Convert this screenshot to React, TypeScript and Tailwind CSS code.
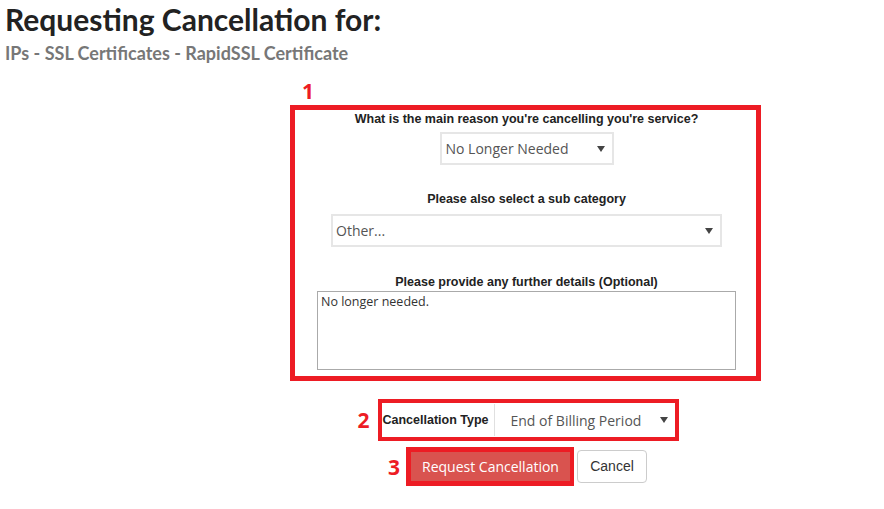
import React from "react";

const Arrow = () => (
  <svg width="8" height="6" viewBox="0 0 8 6">
    <path d="M0 0 L8 0 L4 6 Z" fill="#444" />
  </svg>
);

const labelCls =
  "text-[12.5px] leading-[16px] font-bold text-[#222] font-['Liberation_Sans',Arial,sans-serif]";
const selectText = "text-[14px] text-[#555] font-['Open_Sans',sans-serif]";
const numCls =
  "absolute text-[21px] leading-[24px] font-bold text-[#ed1c24] font-['Open_Sans',sans-serif]";

export default function App() {
  return (
    <div className="w-[884px] h-[509px] bg-white overflow-hidden relative">
      <div className="pl-[5px] pt-[1px] font-['Lato','Open_Sans',sans-serif]">
        <h1 className="text-[30px] leading-[36px] font-bold text-[#222]">Requesting Cancellation for:</h1>
        <div className="text-[18px] leading-[22px] font-bold text-[#777] mt-[5px]">
          IPs - SSL Certificates - RapidSSL Certificate
        </div>
      </div>
      <div className="ml-[290px] w-[471px] flex flex-col items-center">
        <div className="self-start relative h-[41px] w-full">
          <span className={`${numCls} left-[12px] top-[15px]`}>1</span>
        </div>
        <div className="w-[471px] h-[276px] border-[5px] border-[#ed1c24] flex flex-col items-center">
          <div className={`${labelCls} mt-[1px] pl-[2px]`}>
            What is the main reason you're cancelling you're service?
          </div>
          <div className="mt-[5px] w-[174px] h-[33px] border-2 border-[#e6e6e6] flex items-center justify-between pl-[4px] pr-[7px] ml-[2px]">
            <span className={selectText}>No Longer Needed</span>
            <Arrow />
          </div>
          <div className={`${labelCls} mt-[26px] pl-[2px]`}>Please also select a sub category</div>
          <div className="mt-[7px] w-[391px] h-[33px] border-2 border-[#e6e6e6] flex items-center justify-between pl-[3px] pr-[7px] ml-[2px]">
            <span className={selectText}>Other...</span>
            <Arrow />
          </div>
          <div className={`${labelCls} mt-[27px] pl-[2px]`}>Please provide any further details (Optional)</div>
          <div className="mt-[1px] w-[419px] h-[79px] border border-[#aaa] px-[3px] ml-[2px] leading-[16px]">
            <span className="text-[12.5px] leading-[16px] text-[#333] font-['Open_Sans',sans-serif]">
              No longer needed.
            </span>
          </div>
        </div>
        <div className="relative mt-[18px] ml-[5px]">
          <span className={`${numCls} right-[100%] mr-[8px] top-[9px]`}>2</span>
          <div className="w-[301px] h-[42px] border-4 border-[#ed1c24] flex items-center">
            <span className={`${labelCls} pl-[1px] w-[112px]`}>Cancellation Type</span>
            <div className="h-[32px] flex-1 border-l border-[#e0e0e0] flex items-center justify-between pl-[16px] pr-[7px]">
              <span className={selectText}>End of Billing Period</span>
              <Arrow />
            </div>
          </div>
        </div>
        <div className="flex items-center mt-[6px] ml-[2px] relative">
          <span className={`${numCls} right-[100%] mr-[6px] top-[8px]`}>3</span>
          <div className="border-[5px] border-[#ed1c24] border-r-4">
            <div className="w-[159px] h-[29px] bg-[#d9534f] text-white text-[14px] flex items-center justify-center font-['Open_Sans',sans-serif]">
              Request Cancellation
            </div>
          </div>
          <div className="ml-[3px] w-[70px] h-[33px] border border-[#ccc] rounded-[4px] flex items-center justify-center text-[14px] text-[#333] font-['Liberation_Sans',Arial,sans-serif]">
            Cancel
          </div>
        </div>
      </div>
    </div>
  );
}
